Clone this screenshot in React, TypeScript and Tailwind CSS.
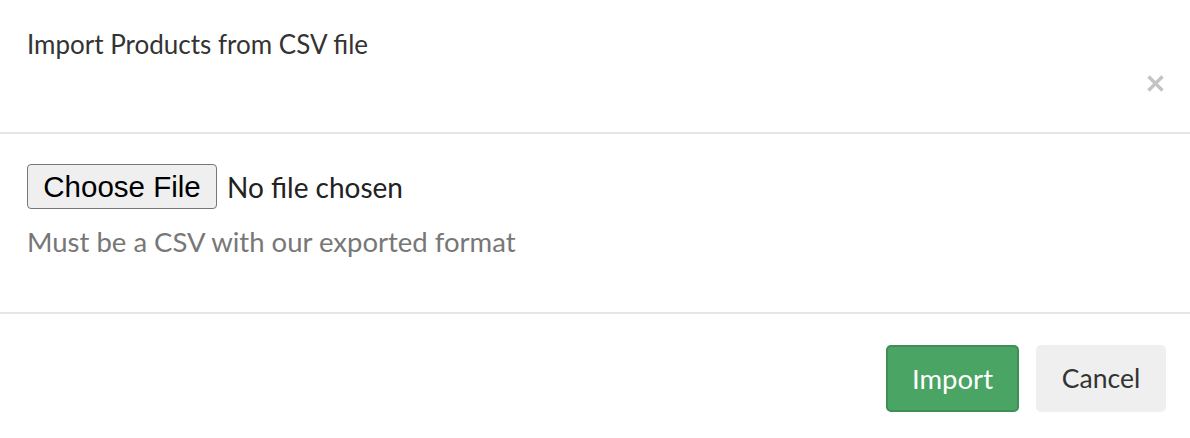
export default function App() {
  return (
    <div className="w-[1190px] h-[438px] bg-white text-[#333] font-['Lato',sans-serif]">
      <div className="h-[132px] flex justify-between pl-[27px] pr-[26px] pt-[28px]">
        <h4 className="text-[26px] leading-[32px]">Import Products from CSV file</h4>
        <button className="mt-[47px] h-[17px] w-[17px] text-[#c4c4c4]" aria-label="Close">
          <svg viewBox="0 0 17 17" className="h-[17px] w-[17px]">
            <path d="M1.5 1.5L15.5 15.5M15.5 1.5L1.5 15.5" stroke="currentColor" strokeWidth="3.4" />
          </svg>
        </button>
      </div>
      <div className="border-t-2 border-[#e5e5e5] h-[180px] pt-[30px] px-[27px]">
        <div className="flex items-center gap-[10px]">
          <button className="h-[45px] w-[190px] rounded-[4px] border border-[#767676] bg-[#efefef] text-[29.5px] leading-none text-black font-['Liberation_Sans',sans-serif]">
            Choose File
          </button>
          <span className="text-[28px] text-[#222]">No file chosen</span>
        </div>
        <p className="mt-[17px] text-[27.5px] leading-[32px] text-[#777]">Must be a CSV with our exported format</p>
      </div>
      <div className="border-t-2 border-[#e5e5e5] flex justify-end gap-[17px] pt-[31px] pr-[24px]">
        <button className="h-[67px] w-[133px] rounded-[5px] border-2 border-[#3e8e55] bg-[#4aa463] text-white text-[27.5px]">
          Import
        </button>
        <button className="h-[67px] w-[130px] rounded-[5px] bg-[#efefef] text-[#333] text-[26.5px]">Cancel</button>
      </div>
    </div>
  );
}
